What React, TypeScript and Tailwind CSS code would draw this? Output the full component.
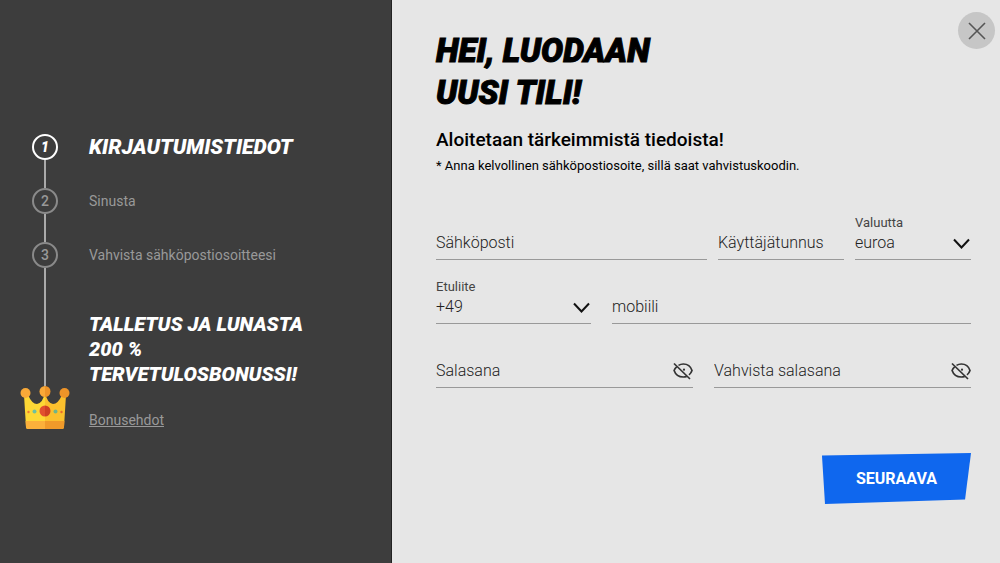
import { useState } from "react";
import type { ReactNode } from "react";
import clsx from "clsx";

const steps = ["Kirjautumistiedot", "Sinusta", "Vahvista sähköpostiosoitteesi"];

function Crown() {
  return (
    <svg className="block shrink-0" width="50" height="44" viewBox="0 0 50 44">
      <path
        d="M4 9 L6 41 Q6 43 8 43 H25 V6 Q23 17 17 18 Q12 18 8 9Z"
        fill="#fdd835"
      />
      <path
        d="M46 9 L44 41 Q44 43 42 43 H25 V6 Q27 17 33 18 Q38 18 42 9Z"
        fill="#fbc02d"
      />
      <path d="M5.600 35 H25 V43 H8 Q6 43 6 41Z" fill="#fbb03b" />
      <path d="M44.400 35 H25 V43 H42 Q44 43 44 41Z" fill="#f09a2a" />
      <circle cx="5.500" cy="7" r="5" fill="#f9a938" />
      <circle cx="44.500" cy="7" r="5" fill="#ee9428" />
      <path d="M25 0 A5.500 5.500 0 0 0 25 11Z" fill="#f9a938" />
      <path d="M25 0 A5.500 5.500 0 0 1 25 11Z" fill="#ee9428" />
      <path d="M25 19.500 A5.500 5.500 0 0 0 25 30.500Z" fill="#e2502f" />
      <path d="M25 19.500 A5.500 5.500 0 0 1 25 30.500Z" fill="#cf4024" />
      <circle cx="14.500" cy="25.500" r="2" fill="#6dc0a0" />
      <circle cx="35.500" cy="25.500" r="2" fill="#6fb58b" />
      <circle cx="8.500" cy="26" r="1.200" fill="#ef7a35" />
      <circle cx="41.500" cy="26" r="1.200" fill="#e8682f" />
    </svg>
  );
}

function Chevron() {
  return (
    <svg
      className="pointer-events-none absolute right-0 top-[7px]"
      width="18"
      height="12"
      viewBox="0 0 18 12"
      fill="none"
      stroke="#111"
      strokeWidth="2"
    >
      <path d="M1 1.500 L8.500 9.500 L16 1.500" />
    </svg>
  );
}

function EyeOff() {
  return (
    <svg
      className="block"
      width="20"
      height="18"
      viewBox="0 0 20 18"
      fill="none"
      stroke="#333"
      strokeWidth="1.700"
    >
      <path d="M5.500 3.400 C6.900 2.500 8.500 2 10.300 2 C14.500 2 17.800 4.800 19 8.500 C18.400 10.300 17.400 11.800 16 12.900" />
      <path d="M3.700 4.800 C2.500 5.800 1.600 7.100 1.100 8.500 C2.400 12.300 5.900 15 10.300 15 C11.500 15 12.700 14.800 13.700 14.400" />
      <path d="M1 1.500 L17 17" />
      <circle cx="11" cy="7.700" r="1.100" fill="#333" stroke="none" />
    </svg>
  );
}

const fieldBox = "border-b border-[#999] pb-1";
const control =
  "block h-6 w-full min-w-0 appearance-none rounded-none bg-transparent text-base font-light text-[#222] outline-none placeholder:text-[#222] placeholder:opacity-100";

function TextField({
  name,
  type = "text",
  className,
}: {
  name: string;
  type?: string;
  className: string;
}) {
  const [value, setValue] = useState("");

  return (
    <div className={clsx(fieldBox, className)}>
      <input
        className={control}
        type={type}
        aria-label={name}
        placeholder={name}
        value={value}
        onChange={(e) => setValue(e.target.value)}
      />
    </div>
  );
}

function PasswordField({ name }: { name: string }) {
  const [value, setValue] = useState("");
  const [visible, setVisible] = useState(false);

  return (
    <div className={clsx(fieldBox, "flex flex-1 items-center")}>
      <input
        className={control}
        type={visible ? "text" : "password"}
        aria-label={name}
        placeholder={name}
        value={value}
        onChange={(e) => setValue(e.target.value)}
      />
      <button
        type="button"
        aria-label="Näytä salasana"
        onClick={() => setVisible(!visible)}
      >
        <EyeOff />
      </button>
    </div>
  );
}

function SelectField({
  id,
  label,
  className,
  children,
}: {
  id: string;
  label: string;
  className: string;
  children: ReactNode;
}) {
  return (
    <div className={clsx(fieldBox, className)}>
      <label className="block text-[13px] leading-4 text-[#444]" htmlFor={id}>
        {label}
      </label>
      <div className="relative">
        <select id={id} className={control}>
          {children}
        </select>
        <Chevron />
      </div>
    </div>
  );
}

const row = "flex h-[46px] items-end";

export default function App() {
  return (
    <div className="relative flex min-h-screen bg-[#e6e6e6] font-[Roboto,sans-serif]">
      <aside className="flex w-[39.2%] flex-col justify-center border-r border-[#222] bg-[#3d3d3d] pl-5 text-[#999]">
        <ol>
          {steps.map((step, i) => (
            <li key={step} className="flex h-[54px] gap-[19px]">
              <div className="flex w-[50px] flex-col items-center">
                <span
                  className={clsx(
                    "flex size-[26px] shrink-0 items-center justify-center rounded-full border-2 text-sm",
                    i === 0
                      ? "border-white font-black italic text-white"
                      : "border-[#8a8a8a] font-medium",
                  )}
                >
                  {i + 1}
                </span>
                <span className="w-0.5 flex-1 bg-[#aaa]" />
              </div>
              <span
                className={clsx(
                  "h-[26px] leading-[26px]",
                  i === 0
                    ? "text-[21px] font-black uppercase italic text-white"
                    : "text-sm",
                )}
              >
                {step}
              </span>
            </li>
          ))}
        </ol>
        <div className="flex gap-[19px]">
          <div className="flex w-[50px] flex-col items-center">
            <span className="w-0.5 flex-1 bg-[#aaa]" />
            <Crown />
          </div>
          <div className="pt-4">
            <h2 className="text-xl leading-[25px] font-black uppercase italic text-white">
              Talletus ja lunasta
              <br />
              200 %
              <br />
              tervetulosbonussi!
            </h2>
            <a
              href="#bonusehdot"
              className="mt-[23px] block text-sm leading-5 underline"
            >
              Bonusehdot
            </a>
          </div>
        </div>
      </aside>

      <main className="flex-1 pt-[30px] pr-[29px] pl-11 text-black">
        <h1 className="text-[33px] leading-[42px] font-black uppercase italic [-webkit-text-stroke:1px_black]">
          Hei, luodaan
          <br />
          uusi tili!
        </h1>
        <p className="mt-3 text-[19px] leading-7 font-medium">
          Aloitetaan tärkeimmistä tiedoista!
        </p>
        <p className="mt-1 text-[13px] leading-4">
          * Anna kelvollinen sähköpostiosoite, sillä saat vahvistuskoodin.
        </p>

        <form
          className="mt-10 flex flex-col gap-[18px]"
          onSubmit={(e) => e.preventDefault()}
        >
          <div className={clsx(row, "gap-[11px]")}>
            <TextField name="Sähköposti" type="email" className="flex-1" />
            <TextField name="Käyttäjätunnus" className="w-[126px]" />
            <SelectField id="currency" label="Valuutta" className="w-[116px]">
              <option>euroa</option>
            </SelectField>
          </div>
          <div className={clsx(row, "gap-[21px]")}>
            <SelectField id="prefix" label="Etuliite" className="w-[155px]">
              <option>+49</option>
            </SelectField>
            <TextField name="mobiili" type="tel" className="flex-1" />
          </div>
          <div className={clsx(row, "gap-[21px]")}>
            <PasswordField name="Salasana" />
            <PasswordField name="Vahvista salasana" />
          </div>
          <button
            type="submit"
            className="mt-[47px] h-[51px] w-[149px] self-end bg-[#0f67ee] text-base font-bold text-white [clip-path:polygon(0_5%,100%_0,96%_91%,2%_100%)]"
          >
            SEURAAVA
          </button>
        </form>
      </main>

      <button
        type="button"
        aria-label="Sulje"
        className="absolute top-3 right-[5px] flex size-[37px] items-center justify-center rounded-full bg-[#c6c6c6]"
      >
        <svg
          width="18"
          height="18"
          viewBox="0 0 18 18"
          stroke="#555"
          strokeWidth="1.600"
        >
          <path d="M1 1 L17 17 M17 1 L1 17" />
        </svg>
      </button>
    </div>
  );
}
